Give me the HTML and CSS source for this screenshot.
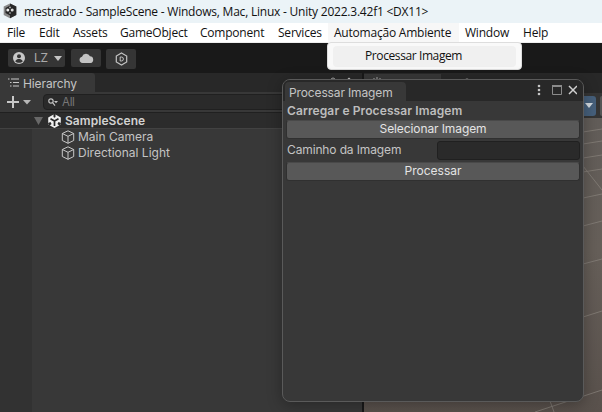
FILE: index.html
```
<!DOCTYPE html>
<html lang="pt">
<head>
<meta charset="utf-8">
<title>mestrado - SampleScene</title>
<link rel="stylesheet" href="styles.css">
</head>
<body>
<svg class="defs" width="0" height="0">
  <symbol id="cube" viewBox="0 0 14 14"><path d="M7 .8 12.7 3.500v7L7 13.300 1.300 10.500v-7zM1.300 3.500 7 6.300l5.700-2.800M7 6.300v7" fill="none" stroke="#c8c8c8" stroke-linejoin="round"/></symbol>
</svg>
<div class="app">
  <header class="titlebar">
    <svg class="logo" width="14" height="16" viewBox="0 0 14 16"><path d="M7 .5 13.300 3.500v8.500L7 15.300.7 12V3.500z" fill="#888"/><path d="M7 .5 13.300 3.500v8.500L7 15.300V10z" fill="#292929"/><path d="M7 2.500 11.500 5v5L7 12.500 2.500 10V5z" fill="#252525"/><path d="M7 9v2" stroke="#bbb"/><circle cx="4.800" cy="7" r="1.500" fill="#eee"/><circle cx="9.200" cy="7" r="1.500" fill="#ddd"/><circle cx="7" cy="4.400" r=".9" fill="#bbb"/></svg>
    <span class="title">mestrado - SampleScene - Windows, Mac, Linux - Unity 2022.3.42f1 &lt;DX11&gt;</span>
  </header>
  <nav class="menu">
    <span>File</span><span>Edit</span><span>Assets</span><span>GameObject</span><span>Component</span><span>Services</span><span class="open">Automação Ambiente</span><span>Window</span><span>Help</span>
  </nav>
  <div class="toolbar">
    <div class="tool account">
      <svg width="12" height="12" viewBox="0 0 12 12"><circle cx="6" cy="6" r="6" fill="#c8c8c8"/><circle cx="6" cy="4.200" r="2" fill="#353535"/><path d="M2.200 9.200C3 7.500 4.600 7 6 7s3 .5 3.800 2.200C8.800 10.300 7.500 10.800 6 10.800S3.200 10.300 2.200 9.200z" fill="#353535"/></svg>
      <span>LZ</span>
      <svg width="8" height="5" viewBox="0 0 8 5"><path d="M0 0h8L4 5z" fill="#c4c4c4"/></svg>
    </div>
    <div class="tool"><svg width="15" height="10" viewBox="0 0 15 10"><path d="M3.500 10a3.200 3.200 0 0 1-.5-6.300A4.300 4.300 0 0 1 11 3.300 3.400 3.400 0 0 1 11.600 10z" fill="#c4c4c4"/></svg></div>
    <div class="tool last"><svg width="13" height="14" viewBox="0 0 13 14"><path d="M6.500 1 11.700 4v6L6.500 13 1.300 10V4z" fill="none" stroke="#c4c4c4" stroke-width="1.200"/><path d="M5.200 5h1.200a2 2 0 0 1 0 4H5.200z" fill="none" stroke="#c4c4c4"/></svg></div>
  </div>
  <main class="dock">
    <section class="hierarchy">
      <div class="tabs">
        <div class="tab"><svg width="11" height="9" viewBox="0 0 11 9"><path d="M3 1h8M5 4.500h6M5 8h6M0 1h1.500M2 4.500h1.500M2 8h1.500" stroke="#c8c8c8"/></svg><span>Hierarchy</span></div>
        <svg class="lock" width="24" height="12" viewBox="0 0 24 12"><path d="M1 7V3a2 2 0 0 1 4 0v3" fill="none" stroke="#aaa"/><path d="M0 6h6v5H0z" fill="#aaa"/><circle cx="19" cy="2" r="1.300" fill="#bbb"/><circle cx="19" cy="7" r="1.200" fill="#bbb"/></svg>
      </div>
      <div class="searchbar">
        <svg width="24" height="12" viewBox="0 0 24 12"><path d="M6 0v12M0 6h12" stroke="#c8c8c8" stroke-width="2"/><path d="M16 4h8l-4 4.500z" fill="#b8b8b8"/></svg>
        <div class="search"><svg width="10" height="8" viewBox="0 0 10 8"><circle cx="3" cy="3" r="2.200" fill="none" stroke="#c4c4c4" stroke-width="1.200"/><path d="m4.600 4.600 2.400 3" stroke="#c4c4c4" stroke-width="1.200"/><path d="M6 3h4L8 5.200z" fill="#c4c4c4"/></svg><span>All</span></div>
      </div>
      <div class="scene-row">
        <svg width="9" height="8" viewBox="0 0 9 8"><path d="M0 0h9L4.500 8z" fill="#686868"/></svg>
        <svg width="13" height="14" viewBox="0 0 13 14"><path d="M6.500 0 12.800 3.500v7L6.500 14 .2 10.500v-7z" fill="#f0f0f0"/><path d="M6.500 7v5M6.500 7 2.500 4.700M6.500 7l4-2.300" stroke="#292929" stroke-width="1.700"/><path d="M5.500 0h2v3l-1 .7-1-.7zM0 9l2.500-.9L3.600 10 1 12zM13 9l-2.500-.9L9.400 10 12 12z" fill="#292929"/></svg>
        <span>SampleScene</span>
      </div>
      <div class="tree">
        <div class="gutter"></div>
        <div class="nodes">
          <div class="node"><svg width="14" height="14"><use href="#cube"/></svg><span>Main Camera</span></div>
          <div class="node"><svg width="14" height="14"><use href="#cube"/></svg><span>Directional Light</span></div>
        </div>
      </div>
    </section>
    <section class="scene">
      <div class="scene-tabs"><div class="scene-tab"><svg width="10" height="8" viewBox="0 0 10 8"><path d="M2 1v7M5 0v8M8 1v7M0 3h10M0 6h10" stroke="#aaa"/></svg></div><svg width="12" height="6" viewBox="0 0 12 6"><circle cx="6" cy="3" r="2.500" fill="#aaa"/></svg></div>
      <div class="scene-tools"><div class="blue"><svg width="8" height="5" viewBox="0 0 8 5"><path d="M0 0h8L4 5z" fill="#d5dce2"/></svg></div><div class="next"></div></div>
      <svg class="view" width="238" height="294" viewBox="364 118 238 294">
        <defs><linearGradient id="ground" x2="0" y2="1"><stop stop-color="#625d59"/><stop offset=".45" stop-color="#665f59"/><stop offset="1" stop-color="#59514c"/></linearGradient></defs>
        <path d="M364 118h238v294H364z" fill="url(#ground)"/>
        <path d="M583 132l19-3M583 144l19-3M583 158l19-3M583 172l19-3M583 198l19-4M583 226l19-5M583 264l19-5M583 317l19-6M583 166l19 24M535 412l67-22M550 401l4 11" fill="none" stroke="#86807a" stroke-width=".8"/>
      </svg>
    </section>
  </main>
</div>
<div class="dropdown"><div>Processar Imagem</div></div>
<section class="window">
  <div class="wintabs">
    <div class="wintab">Processar Imagem</div>
    <svg width="40" height="12" viewBox="0 0 40 12"><g fill="#c4c4c4"><circle cx="2" cy="2" r="1.300"/><circle cx="2" cy="6" r="1.300"/><circle cx="2" cy="10" r="1.300"/></g><path d="M15.500 1.500h9v9h-9z" fill="none" stroke="#8b8b8b"/><path d="M15 2h10" stroke="#8b8b8b" stroke-width="2"/><path d="m32 2 8 8m0-8-8 8" stroke="#d0d0d0" stroke-width="1.500"/></svg>
  </div>
  <div class="content">
    <h2>Carregar e Processar Imagem</h2>
    <button>Selecionar Imagem</button>
    <div class="field"><span>Caminho da Imagem</span><div class="input"></div></div>
    <button class="process">Processar</button>
  </div>
</section>
</body>
</html>
```
FILE: styles.css
```
* { box-sizing: border-box; }
body { margin: 0; width: 602px; height: 412px; overflow: hidden; position: relative; background: #191919; font: 12px/16px Inter, sans-serif; color: #c4c4c4; }
svg { display: block; flex: none; }
span { white-space: nowrap; }
.defs { position: absolute; }
.app { display: flex; flex-direction: column; height: 412px; }
.titlebar { height: 23px; flex: none; display: flex; align-items: center; padding: 1px 0 0 3px; background: #ebf3f7; color: #111; font: 12px/20px "Open Sans", sans-serif; }
.logo { margin-bottom: 2px; }
.title { margin-left: 7px; letter-spacing: -.22px; }
.menu { height: 20px; flex: none; display: grid; grid-template-columns: 32px 34px 47px 80px 78px 50px 137px 58px 1fr; padding-left: 7px; background: #fff; color: #111; font: 12px/20px "Open Sans", sans-serif; letter-spacing: -.22px; border-bottom: 1px solid #eee; }
.open { width: 131px; background: #f7f7f7; padding-left: 6px; }
.toolbar { height: 30px; flex: none; display: flex; align-items: flex-start; padding: 6px 0 0 8px; background: #191919; gap: 6px; }
.tool { width: 30px; height: 18px; display: flex; align-items: center; justify-content: center; background: #353535; border-radius: 2px; }
.account { width: 57px; justify-content: flex-start; padding-left: 5px; color: #aaa; }
.account span { width: 21px; margin-left: 9px; letter-spacing: -.3px; }
.account svg:last-child { margin-left: -1px; }
.last { height: 20px; margin-left: -1px; }
.dock { display: flex; height: 339px; }
.hierarchy { width: 362px; flex: none; margin-right: 2px; background: #383838; }
.tabs { height: 19px; background: #282828; display: flex; justify-content: space-between; }
.tab { width: 95px; background: #383838; display: flex; align-items: center; padding: 2px 0 0 8px; gap: 4px; letter-spacing: -.1px; border-radius: 0 3px 0 0; }
.tab svg { margin-bottom: 3px; }
.lock { margin: 4px 8px 0 0; }
.searchbar { height: 21px; display: flex; align-items: center; padding-left: 7px; border-bottom: 1px solid #202020; }
.search { flex: 1; height: 16px; margin-left: 12px; display: flex; align-items: center; padding-left: 4px; background: #2a2a2a; border: 1px solid #202020; border-radius: 4px; font-size: 11.5px; letter-spacing: -.3px; color: #777; gap: 4px; }
.scene-row { height: 16px; display: flex; align-items: center; padding-left: 34px; background: #2c2c2c; border-bottom: 1px solid #424242; color: #d2d2d2; font-weight: 600; }
.scene-row svg + svg { margin-left: 5px; }
.scene-row span { margin-left: 4px; letter-spacing: .06px; }
.tree { display: flex; height: 283px; }
.gutter { width: 32px; background: #323232; }
.nodes { flex: 1; }
.node { display: flex; align-items: center; height: 16px; padding-left: 29px; gap: 3px; }
.scene { width: 238px; display: flex; flex-direction: column; background: #282828; }
.scene-tabs { height: 20px; display: flex; align-items: flex-start; gap: 20px; padding-top: 1px; }
.scene-tab { width: 77px; height: 19px; background: #383838; padding: 3px 0 0 8px; }
.scene-tabs > svg { margin-top: 4px; }
.scene-tools { height: 25px; display: flex; justify-content: flex-end; align-items: center; gap: 4px; background: #353535; }
.blue { width: 22px; height: 20px; display: flex; align-items: center; justify-content: flex-end; padding-right: 3px; background: #46607c; border-radius: 0 3px 3px 0; }
.next { width: 11px; margin-right: -9px; height: 20px; background: #555; border-radius: 2px 0 0 2px; }
.dropdown { position: absolute; left: 327px; top: 42px; width: 195px; height: 28px; padding: 3px 5px; background: #f9f9f9; border: 1px solid #ddd; border-radius: 4px; color: #111; font: 12px/20px "Open Sans", sans-serif; letter-spacing: -.4px; }
.dropdown div { height: 21px; padding-left: 32px; background: #f0f0f0; border-radius: 4px; }
.window { position: absolute; left: 282px; top: 79px; width: 302px; height: 323px; background: #383838; border: 1px solid #5a5a5a; border-radius: 8px; overflow: hidden; box-shadow: 0 3px 15px rgba(0,0,0,.3); }
.wintabs { height: 21px; display: flex; justify-content: space-between; padding: 2px 6px 0 2px; background: #282828; }
.wintab { width: 121px; padding: 3px 0 0 4px; background: #383838; border-radius: 4px 4px 0 0; letter-spacing: -.13px; }
.wintabs svg { margin-top: 2px; }
.content { padding: 2px 4px 0; }
.window h2 { margin: 0; height: 17px; font: 600 12px/16px Inter, sans-serif; letter-spacing: .11px; color: #bdbdbd; }
.window button { display: block; width: 294px; height: 19px; margin: 0 0 0 -1px; padding: 0 0 1px; font: 12px/16px Inter, sans-serif; letter-spacing: -.1px; color: #e4e4e4; background: #585858; border: 1px solid #303030; border-top-color: #494949; border-radius: 3px; }
.window .process { letter-spacing: 0; }
.field { height: 22px; display: flex; align-items: center; justify-content: space-between; letter-spacing: -.13px; }
.input { width: 143px; height: 19px; margin-right: -1px; background: #2a2a2a; border: 1px solid #202020; border-radius: 3px; }
.field + button { margin-top: 1px; }
```
